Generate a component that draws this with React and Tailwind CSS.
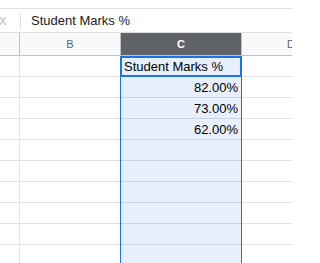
import React from "react";

const rows = [
  { c: "Student Marks %", head: true },
  { c: "82.00%" },
  { c: "73.00%" },
  { c: "62.00%" },
  {}, {}, {}, {}, {}, {},
];

export default function App() {
  return (
    <div
      className="w-[292px] h-[263px] overflow-hidden bg-white text-[13px]"
      style={{ fontFamily: "Arial, 'Liberation Sans', sans-serif" }}
    >
      {/* formula bar */}
      <div className="mt-[8px] h-[25px] border-y border-[#e0e0e0] flex items-center">
        <div className="w-[20px] h-full flex items-center overflow-hidden">
          <span className="-ml-[1px] text-[15px] text-[#c4c4c4]">x</span>
        </div>
        <div className="w-px h-[16px] bg-[#dadce0]" />
        <span className="ml-[10px] text-[13px] text-[#202124]">Student Marks %</span>
      </div>

      {/* column headers */}
      <div className="flex h-[23px] border-b border-[#c0c0c0]">
        <div className="w-[20px] bg-[#f8f9fa] border-r border-[#c0c0c0]" />
        <div className="w-[100px] bg-[#f8f9fa] flex items-center justify-center text-[11px] text-[#5f6368]">
          B
        </div>
        <div className="w-[122px] bg-[#5f6368] border-x border-[#c0c0c0] flex items-center justify-center text-[11px] font-bold text-white">
          C
        </div>
        <div className="flex-1 bg-[#f8f9fa] flex items-center justify-end text-[11px] text-[#5f6368]">
          <span className="-mr-[3px]">D</span>
        </div>
      </div>

      {/* grid rows */}
      {rows.map((r, i) => (
        <div key={i} className="flex h-[21px]">
          <div className="w-[20px] border-r border-b border-[#e2e2e2]" />
          <div className="w-[100px] border-b border-[#e2e2e2]" />
          <div className="w-[122px] border-x border-[#1a73e8] bg-[#e8f0fd]">
            {r.head ? (
              <div className="h-full border-2 -mx-px border-[#1a73e8] flex items-center pl-[2px] text-black leading-none">
                {r.c}
              </div>
            ) : (
              <div className="h-full border-b border-[#c8d2e1] flex items-center justify-end pr-[3px] text-black leading-none">
                {r.c}
              </div>
            )}
          </div>
          <div className="flex-1 border-b border-[#e2e2e2]" />
        </div>
      ))}
    </div>
  );
}
